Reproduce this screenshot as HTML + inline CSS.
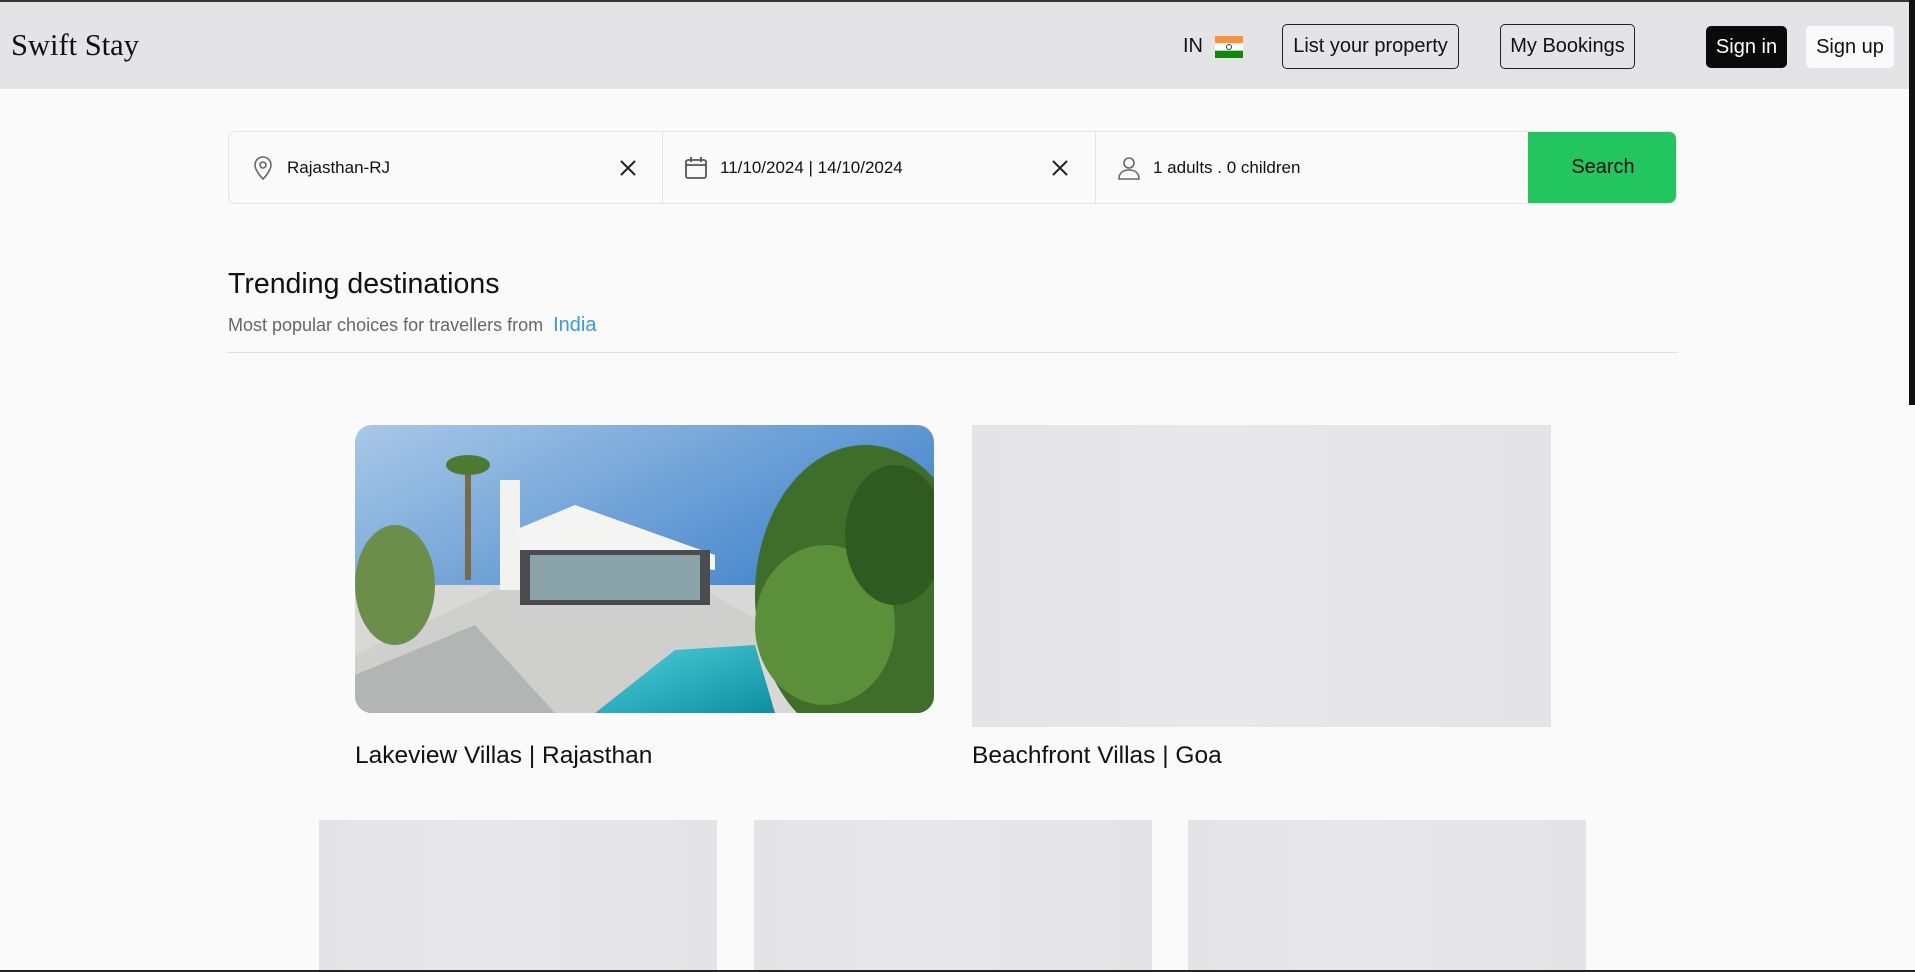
<!DOCTYPE html>
<html><head><meta charset="utf-8">
<style>
*{box-sizing:border-box;margin:0;padding:0}
html,body{width:1915px;height:972px;overflow:hidden;background:#fafafa;font-family:"Liberation Sans",Arial,sans-serif;color:#111}
.top{position:absolute;left:0;top:0;width:1915px;height:3px;background:#2f3f2f}
header{position:absolute;left:0;top:2px;width:1915px;height:87px;background:#e4e4e7}
.logo{position:absolute;left:11px;top:26px;font-family:"Liberation Serif",serif;font-size:30.5px;color:#111}
.in{position:absolute;left:1183px;top:33px;font-size:20px}
.flag{position:absolute;left:1215px;top:34px;width:28px;height:22px}
.btn{position:absolute;top:22px;height:45px;border:1px solid #222;border-radius:5px;font-size:20px;display:flex;align-items:center;justify-content:center}
.sb{position:absolute;left:1909px;top:0;width:6px;height:405px;background:#111}
.bot{position:absolute;left:0;top:970px;width:1915px;height:2px;background:#222}
.search{position:absolute;left:228px;top:131px;width:1449px;height:73px;border:1px solid #e2e2e2;border-radius:8px;background:#fafafa;overflow:hidden}
.seg{position:absolute;top:0;height:71px;font-size:17px;display:flex;align-items:center}
.div{position:absolute;top:0;width:1px;height:71px;background:#e2e2e2}
.go{position:absolute;left:1299px;top:-1px;width:150px;height:73px;background:#22c55e;font-size:20px;display:flex;align-items:center;justify-content:center;color:#111}
h2{position:absolute;left:228px;top:268px;font-size:28.5px;font-weight:normal}
.sub{position:absolute;left:228px;top:314px;font-size:18px;color:#666}
.sub span{color:#3b9bd6;font-size:20px;margin-left:10px}
.hr{position:absolute;left:228px;top:352px;width:1450px;height:1px;background:#e0e0e0}
.ph{position:absolute;background:linear-gradient(90deg,#e4e4e7,#e8e8ea 40%,#e4e4e7);}
.t{position:absolute;font-size:24.5px}
</style></head><body>
<div class="top"></div>
<header>
<div class="logo">Swift Stay</div>
<div class="in">IN</div>
<svg class="flag" viewBox="0 0 28 22"><rect width="28" height="7.3" fill="#f7933a"/><rect y="7.3" width="28" height="7.4" fill="#fff"/><rect y="14.7" width="28" height="7.3" fill="#138808"/><circle cx="14" cy="11" r="2.5" fill="none" stroke="#1a3a8a" stroke-width="1"/></svg>
<div class="btn" style="left:1282px;width:177px">List your property</div>
<div class="btn" style="left:1500px;width:135px">My Bookings</div>
<div class="btn" style="left:1706px;width:81px;top:24px;height:42px;background:#0a0a0a;color:#fff;border-color:#0a0a0a">Sign in</div>
<div class="btn" style="left:1806px;width:88px;top:24px;height:42px;background:#fafafa;border-color:#fafafa">Sign up</div>
</header>
<div class="sb"></div>
<div class="search">
<div class="seg" style="left:22px"><svg width="24" height="26" viewBox="0 0 24 26" fill="none" stroke="#666" stroke-width="1.6"><path d="M12 24s-8-8-8-14a8 8 0 0 1 16 0c0 6-8 14-8 14z"/><circle cx="12" cy="10" r="3"/></svg><span style="margin-left:12px">Rajasthan-RJ</span></div>
<svg style="position:absolute;left:389px;top:26px" width="20" height="20" viewBox="0 0 20 20" stroke="#222" stroke-width="2"><path d="M3 3L17 17M17 3L3 17"/></svg>
<div class="div" style="left:433px"></div>
<div class="seg" style="left:455px"><svg width="24" height="26" viewBox="0 0 24 26" fill="none" stroke="#555" stroke-width="1.8"><rect x="2" y="5" width="20" height="18" rx="2"/><path d="M2 10h20M7 2v5M17 2v5"/></svg><span style="margin-left:12px">11/10/2024 | 14/10/2024</span></div>
<svg style="position:absolute;left:821px;top:26px" width="20" height="20" viewBox="0 0 20 20" stroke="#222" stroke-width="2"><path d="M3 3L17 17M17 3L3 17"/></svg>
<div class="div" style="left:866px"></div>
<div class="seg" style="left:888px"><svg width="24" height="26" viewBox="0 0 24 26" fill="none" stroke="#666" stroke-width="1.6"><circle cx="12" cy="8" r="5"/><path d="M2 24c0-6 4-9 10-9s10 3 10 9z"/></svg><span style="margin-left:12px">1 adults . 0 children</span></div>
<div class="go">Search</div>
</div>
<h2>Trending destinations</h2>
<div class="sub">Most popular choices for travellers from<span>India</span></div>
<div class="hr"></div>
<svg style="position:absolute;left:355px;top:425px;border-radius:17px" width="579" height="288" viewBox="0 0 579 288">
<defs><linearGradient id="sky" x1="0" y1="0" x2="1" y2="1"><stop offset="0" stop-color="#a9c8e6"/><stop offset=".6" stop-color="#4f8ccf"/><stop offset="1" stop-color="#2f6fbd"/></linearGradient>
<linearGradient id="pool" x1="0" y1="0" x2="1" y2="1"><stop offset="0" stop-color="#4fd0dc"/><stop offset="1" stop-color="#0d8fa0"/></linearGradient></defs>
<rect width="579" height="288" fill="url(#sky)"/>
<rect y="160" width="579" height="128" fill="#d8d8d6"/>
<polygon points="0,230 140,165 340,160 430,210 250,288 0,288" fill="#cfcfcd"/>
<polygon points="0,250 120,200 200,288 0,288" fill="#b3b5b5"/>
<rect x="145" y="55" width="20" height="110" fill="#f2f2f0"/>
<polygon points="160,105 220,80 360,130 360,145 165,125" fill="#f4f4f2"/>
<rect x="165" y="125" width="190" height="55" fill="#4a4c50"/>
<rect x="175" y="130" width="170" height="45" fill="#8aa3a8"/>
<polygon points="240,288 320,225 400,220 420,288" fill="url(#pool)"/>
<ellipse cx="510" cy="170" rx="110" ry="150" fill="#3f6e2a"/>
<ellipse cx="470" cy="200" rx="70" ry="80" fill="#5c8f3a"/>
<ellipse cx="540" cy="110" rx="50" ry="70" fill="#2f5a20"/>
<ellipse cx="40" cy="160" rx="40" ry="60" fill="#6b8f4a"/>
<rect x="110" y="35" width="6" height="120" fill="#7a6a4a"/>
<ellipse cx="113" cy="40" rx="22" ry="10" fill="#4d7a32"/>
</svg>
<div class="ph" style="left:972px;top:425px;width:579px;height:302px"></div>
<div class="t" style="left:355px;top:742px">Lakeview Villas | Rajasthan</div>
<div class="t" style="left:972px;top:742px">Beachfront Villas | Goa</div>
<div class="ph" style="left:319px;top:820px;width:398px;height:152px"></div>
<div class="ph" style="left:754px;top:820px;width:398px;height:152px"></div>
<div class="ph" style="left:1188px;top:820px;width:398px;height:152px"></div>
<div class="bot"></div>
</body></html>
